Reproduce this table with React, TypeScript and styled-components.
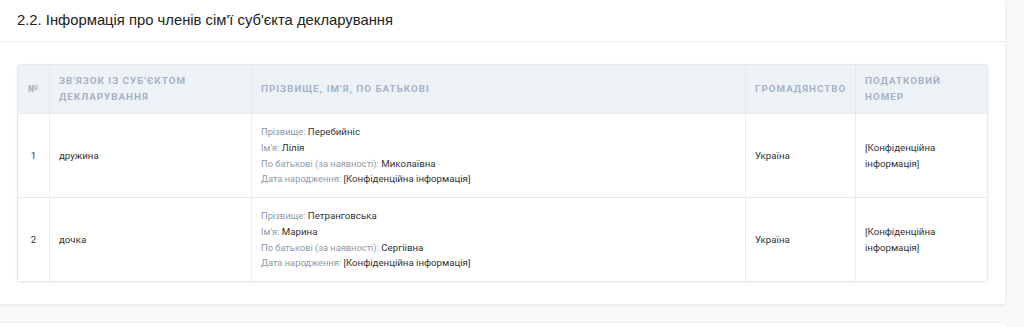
import React from "react";
import styled, { createGlobalStyle } from "styled-components";

const Global = createGlobalStyle`
  html, body { margin: 0; padding: 0; }
  body {
    background: #f9f9f9;
    font-family: Roboto, "Liberation Sans", Arial, sans-serif;
    color: #333;
  }
`;

const Page = styled.div`
  display: flex;
  flex-direction: column;
  gap: 19px;
  width: 1005px;
`;

const Card = styled.section<{ $h?: number }>`
  background: #fff;
  box-shadow: 0 1px 4px rgba(0, 0, 0, 0.07);
  ${(p) => (p.$h ? `height: ${p.$h}px;` : "")}
`;

const CardHeader = styled.header`
  height: 42px;
  box-sizing: border-box;
  padding: 0 17px 2px;
  display: flex;
  align-items: center;
  border-bottom: 1px solid #eceff2;
`;

const Title = styled.h2`
  margin: 0;
  font-family: "Liberation Sans", Arial, sans-serif;
  font-size: 14.8px;
  font-weight: 400;
  color: #222;
`;

const CardBody = styled.div`
  padding: 22px 17px 22px;
`;

const Table = styled.table`
  width: 100%;
  border-collapse: separate;
  border-spacing: 0;
  border: 1px solid #e4e9ee;
  border-radius: 3px;
  box-shadow: 0 1px 3px rgba(0, 0, 0, 0.06);
  table-layout: fixed;
  font-size: 9.7px;
`;

const Th = styled.th<{ $w?: number; $center?: boolean }>`
  width: ${(p) => (p.$w ? `${p.$w}px` : "auto")};
  background: #edf2f7;
  color: #a7b3c3;
  font-weight: 700;
  font-size: 9.8px;
  letter-spacing: 1px;
  text-transform: uppercase;
  text-align: ${(p) => (p.$center ? "center" : "left")};
  height: 48px;
  box-sizing: border-box;
  padding: 0 9px;
  line-height: 16px;
  border-left: 1px solid #e2e8ef;
  &:first-child { border-left: none; }
`;

const Td = styled.td<{ $center?: boolean }>`
  height: 84px;
  box-sizing: border-box;
  padding: 0 9px;
  vertical-align: middle;
  line-height: 16px;
  color: #333;
  text-align: ${(p) => (p.$center ? "center" : "left")};
  border-top: 1px solid #e6eaee;
  border-left: 1px solid #e9edf1;
  &:first-child { border-left: none; }
`;

const Line = styled.div`
  line-height: 15.7px;
`;

const Label = styled.span`
  color: #8e99a6;
  font-size: 9.3px;
`;

type Person = {
  n: number;
  rel: string;
  last: string;
  first: string;
  middle: string;
};

const people: Person[] = [
  { n: 1, rel: "дружина", last: "Перебийніс", first: "Лілія", middle: "Миколаївна" },
  { n: 2, rel: "дочка", last: "Петранговська", first: "Марина", middle: "Сергіівна" },
];

export default function App() {
  return (
    <>
      <Global />
      <Page>
        <Card>
          <CardHeader>
            <Title>2.2. Інформація про членів сім'ї суб'єкта декларування</Title>
          </CardHeader>
          <CardBody>
            <Table>
              <thead>
                <tr>
                  <Th $w={31} $center>№</Th>
                  <Th $w={202}>Зв'язок із суб'єктом декларування</Th>
                  <Th $w={494}>Прізвище, ім'я, по батькові</Th>
                  <Th $w={110}>Громадянство</Th>
                  <Th>Податковий номер</Th>
                </tr>
              </thead>
              <tbody>
                {people.map((p) => (
                  <tr key={p.n}>
                    <Td $center>{p.n}</Td>
                    <Td>{p.rel}</Td>
                    <Td>
                      <Line><Label>Прізвище:</Label> {p.last}</Line>
                      <Line><Label>Ім'я:</Label> {p.first}</Line>
                      <Line><Label>По батькові (за наявності):</Label> {p.middle}</Line>
                      <Line><Label>Дата народження:</Label> [Конфіденційна інформація]</Line>
                    </Td>
                    <Td>Україна</Td>
                    <Td>[Конфіденційна інформація]</Td>
                  </tr>
                ))}
              </tbody>
            </Table>
          </CardBody>
        </Card>
        <Card $h={40} />
      </Page>
    </>
  );
}
